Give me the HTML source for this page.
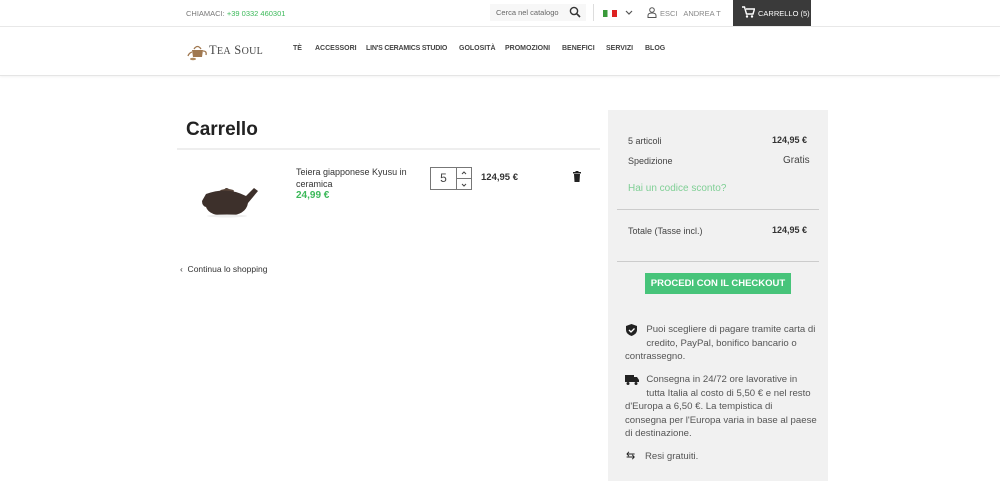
<!DOCTYPE html>
<html><head><meta charset="utf-8"><style>
*{margin:0;padding:0;box-sizing:border-box}
body{width:1000px;height:501px;background:#fff;font-family:"Liberation Sans",sans-serif;color:#333;position:relative;overflow:hidden}
.a{position:absolute;white-space:nowrap}
.top{position:absolute;left:0;top:0;width:1000px;height:27px;border-bottom:1px solid #e8e8e8}
.hdr{position:absolute;left:0;top:27px;width:1000px;height:49px;border-bottom:1px solid #e5e5e5;box-shadow:0 1px 2px rgba(0,0,0,.05)}
.nav{font-size:7px;font-weight:bold;color:#444;top:45px}
.s{font-size:9px;color:#444}
.p{font-size:9.6px;color:#555;line-height:13.6px;white-space:nowrap}
</style></head><body>
<div class="top"></div>
<div class="a" style="left:186px;top:9px;font-size:7.5px;color:#777">CHIAMACI: <span style="color:#3cb95a">+39 0332 460301</span></div>
<div class="a" style="left:490px;top:4px;width:96px;height:17px;background:#f7f7f7"></div>
<div class="a" style="left:496px;top:8px;font-size:7.5px;color:#666">Cerca nel catalogo</div>
<svg class="a" style="left:569px;top:6px" width="12" height="12" viewBox="0 0 12 12"><circle cx="5" cy="5" r="3.6" fill="none" stroke="#333" stroke-width="1.4"/><path d="M7.6 7.6L11 11" stroke="#333" stroke-width="1.6"/></svg>
<div class="a" style="left:593px;top:4px;width:1px;height:17px;background:#ddd"></div>
<div class="a" style="left:603px;top:10px;width:14px;height:7px;background:linear-gradient(90deg,#3a9a3a 33%,#fff 33% 66%,#d22 66%)"></div>
<svg class="a" style="left:625px;top:10px" width="8" height="6"><path d="M1 1l3 3 3-3" fill="none" stroke="#555" stroke-width="1.2"/></svg>
<svg class="a" style="left:647px;top:7px" width="10" height="11" viewBox="0 0 10 11"><circle cx="5" cy="3" r="2.3" fill="none" stroke="#555"/><path d="M1 10.5v-2c0-1.5 1.5-2.5 4-2.5s4 1 4 2.5v2z" fill="none" stroke="#555"/></svg>
<div class="a" style="left:660px;top:9px;font-size:7.5px;color:#888">ESCI&nbsp;&nbsp; ANDREA T</div>
<div class="a" style="left:733px;top:0;width:78px;height:26px;background:#3a3a3a"></div>
<svg class="a" style="left:742px;top:6px" width="13" height="12" viewBox="0 0 13 12"><path d="M0 1h2.5l2 7h6.5l1.5-5H4" fill="none" stroke="#fff" stroke-width="1.4"/><circle cx="5" cy="10.5" r="1.2" fill="#fff"/><circle cx="10" cy="10.5" r="1.2" fill="#fff"/></svg>
<div class="a" style="left:758px;top:9px;font-size:7.5px;color:#fff">CARRELLO (5)</div>
<div class="hdr"></div>
<svg class="a" style="left:187px;top:41px" width="22" height="20" viewBox="0 0 22 20"><path d="M5 9h11l-1 7H6z" fill="#a07850"/><path d="M7 8q3.5-5 7 0" fill="none" stroke="#a07850" stroke-width="1.3"/><path d="M16 10q4 0 3 4" fill="none" stroke="#a07850" stroke-width="1.3"/><path d="M5 11q-3 1-4 4" fill="none" stroke="#a07850" stroke-width="1.3"/><ellipse cx="6" cy="18" rx="3" ry="1.3" fill="#b08a60"/></svg>
<div class="a" style="left:209px;top:43px;font-family:'Liberation Serif',serif;font-size:12.5px;color:#444;letter-spacing:.3px">T<span style="font-size:10px">EA</span> S<span style="font-size:10px">OUL</span></div>
<div class="a nav" style="left:293px">TÈ</div>
<div class="a nav" style="left:315px">ACCESSORI</div>
<div class="a nav" style="left:366px;letter-spacing:-.2px">LIN'S CERAMICS STUDIO</div>
<div class="a nav" style="left:459px">GOLOSITÀ</div>
<div class="a nav" style="left:505px">PROMOZIONI</div>
<div class="a nav" style="left:562px">BENEFICI</div>
<div class="a nav" style="left:606px">SERVIZI</div>
<div class="a nav" style="left:645px">BLOG</div>

<div class="a" style="left:186px;top:119px;font-size:19px;font-weight:bold;color:#222">Carrello</div>
<div class="a" style="left:177px;top:148px;width:423px;height:2px;background:#eee"></div>
<svg class="a" style="left:196px;top:178px" width="64" height="40" viewBox="0 0 64 40"><path d="M28 12q2-4 6 0" fill="#4a3a32"/><ellipse cx="31" cy="13" rx="7" ry="2" fill="#5a463a"/><path d="M10 16q21-8 40 2l8-8 4 3-10 12q-2 12-20 13-19 0-22-9q-4-1-4-6z" fill="#3d302b"/><ellipse cx="31" cy="38" rx="20" ry="1.5" fill="#eee"/></svg>
<div class="a" style="left:296px;top:167px;font-size:9px;color:#333;line-height:11.5px">Teiera giapponese Kyusu in<br>ceramica</div>
<div class="a" style="left:296px;top:190px;font-size:10px;font-weight:bold;color:#3cb95a">24,99 €</div>
<div class="a" style="left:430px;top:167px;width:27px;height:23px;border:1px solid #777;font-size:12px;text-align:center;line-height:21px;color:#444">5</div>
<div class="a" style="left:456px;top:167px;width:16px;height:12px;border:1px solid #777"></div>
<div class="a" style="left:456px;top:178px;width:16px;height:12px;border:1px solid #777"></div>
<svg class="a" style="left:461px;top:171px" width="6" height="4"><path d="M1 3l2-2 2 2" fill="none" stroke="#444"/></svg>
<svg class="a" style="left:461px;top:183px" width="6" height="4"><path d="M1 1l2 2 2-2" fill="none" stroke="#444"/></svg>
<div class="a" style="left:481px;top:172px;font-size:9.5px;font-weight:bold;color:#333">124,95 €</div>
<svg class="a" style="left:573px;top:171px" width="8" height="11" viewBox="0 0 8 11"><rect x="0" y="1" width="8" height="1.5" fill="#222"/><rect x="2.5" y="0" width="3" height="1.5" fill="#222"/><path d="M1 3h6l-.5 8h-5z" fill="#222"/></svg>
<div class="a" style="left:180px;top:264px;font-size:8.5px;color:#333">&#8249;&nbsp; Continua lo shopping</div>

<div class="a" style="left:608px;top:110px;width:220px;height:371px;background:#f1f1f1"></div>
<div class="a s" style="left:628px;top:136px">5 articoli</div>
<div class="a s" style="left:772px;top:135px;font-weight:bold;color:#333">124,95 €</div>
<div class="a s" style="left:628px;top:156px">Spedizione</div>
<div class="a s" style="left:783px;top:155px;font-size:10px">Gratis</div>
<div class="a" style="left:628px;top:183px;font-size:10px;color:#7fcf95">Hai un codice sconto?</div>
<div class="a" style="left:617px;top:209px;width:202px;height:1px;background:#ccc"></div>
<div class="a s" style="left:628px;top:226px">Totale (Tasse incl.)</div>
<div class="a s" style="left:772px;top:225px;font-weight:bold;color:#333">124,95 €</div>
<div class="a" style="left:617px;top:261px;width:202px;height:1px;background:#ccc"></div>
<div class="a" style="left:645px;top:273px;width:146px;height:21px;background:#47c47a;color:#fff;font-size:9.5px;font-weight:bold;text-align:center;line-height:21px">PROCEDI CON IL CHECKOUT</div>
<svg class="a" style="left:626px;top:324px" width="11" height="12" viewBox="0 0 11 12"><path d="M5.5 0L11 2v4q0 4-5.5 6Q0 10 0 6V2z" fill="#222"/><path d="M3 6l2 2 3.5-3.5" fill="none" stroke="#fff" stroke-width="1.3"/></svg>
<div class="a p" style="left:625px;top:323px">&nbsp;&nbsp;&nbsp;&nbsp;&nbsp;&nbsp;&nbsp; Puoi scegliere di pagare tramite carta di<br>&nbsp;&nbsp;&nbsp;&nbsp;&nbsp;&nbsp;&nbsp; credito, PayPal, bonifico bancario o<br>contrassegno.</div>
<svg class="a" style="left:625px;top:375px" width="14" height="10" viewBox="0 0 14 10"><rect x="0" y="0" width="9" height="7" fill="#222"/><path d="M9 2h3l2 3v2H9z" fill="#222"/><circle cx="3" cy="8.5" r="1.5" fill="#222"/><circle cx="11" cy="8.5" r="1.5" fill="#222"/></svg>
<div class="a p" style="left:625px;top:373px">&nbsp;&nbsp;&nbsp;&nbsp;&nbsp;&nbsp;&nbsp; Consegna in 24/72 ore lavorative in<br>&nbsp;&nbsp;&nbsp;&nbsp;&nbsp;&nbsp;&nbsp; tutta Italia al costo di 5,50 € e nel resto<br>d'Europa a 6,50 €. La tempistica di<br>consegna per l'Europa varia in base al paese<br>di destinazione.</div>
<div class="a" style="left:626px;top:449px;font-size:11px;color:#222">&#8646;</div>
<div class="a" style="left:645px;top:451px;font-size:9.6px;color:#555">Resi gratuiti.</div>
</body></html>
